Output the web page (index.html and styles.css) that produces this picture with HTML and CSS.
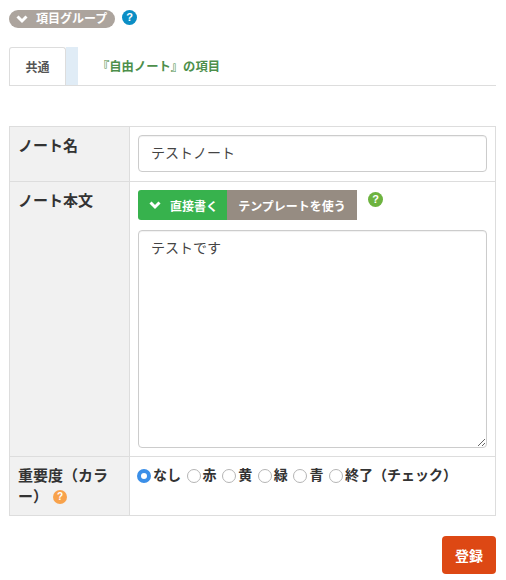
FILE: index.html
```html
<!DOCTYPE html>
<html lang="ja">
<head>
<meta charset="utf-8">
<title>ノート</title>
<link rel="stylesheet" href="styles.css">
</head>
<body>
<div class="group-head">
  <span class="badge">
    <svg class="chev" viewBox="0 0 12 10"><path d="M1.5 2.5 6 7 10.5 2.5" fill="none" stroke="#fff" stroke-width="3"/></svg>
    項目グループ
  </span>
  <span class="help help-blue">?</span>
</div>
<div class="tabs">
  <a class="tab tab-active">共通</a>
  <span class="tab-gap"></span>
  <a class="tab tab-link">『自由ノート』の項目</a>
</div>
<table class="form">
  <tr class="row-name">
    <th>ノート名</th>
    <td><input class="field" type="text" value="テストノート"></td>
  </tr>
  <tr class="row-body">
    <th>ノート本文</th>
    <td>
      <div class="mode">
        <span class="mode-btn mode-on">
          <svg class="chev" viewBox="0 0 12 10"><path d="M1.5 2.5 6 7 10.5 2.5" fill="none" stroke="#fff" stroke-width="3"/></svg>
          直接書く
        </span>
        <span class="mode-btn mode-off">テンプレートを使う</span>
        <span class="help help-green">?</span>
      </div>
      <textarea class="field area">テストです</textarea>
    </td>
  </tr>
  <tr class="row-level">
    <th>重要度（カラー） <span class="help help-orange">?</span></th>
    <td>
      <div class="radios">
        <label><input type="radio" name="c" checked>なし</label>
        <label><input type="radio" name="c">赤</label>
        <label><input type="radio" name="c">黄</label>
        <label><input type="radio" name="c">緑</label>
        <label><input type="radio" name="c">青</label>
        <label><input type="radio" name="c">終了（チェック）</label>
      </div>
    </td>
  </tr>
</table>
<div class="actions"><button class="submit">登録</button></div>
</body>
</html>
```
FILE: styles.css
```css
* { box-sizing: border-box; }
html, body { margin: 0; height: 100%; overflow: hidden; }
body {
  width: 506px;
  padding: 10px 10px 0 9px;
  background: #fff;
  color: #333;
  font-family: "Liberation Sans", "Noto Sans CJK JP", sans-serif;
  font-size: 14px;
}
.group-head { display: flex; align-items: flex-start; height: 37px; }
.badge {
  display: flex; align-items: center; gap: 8px;
  width: 106px; height: 18px; padding-left: 7px;
  background: #aca49d; color: #fff; border-radius: 9px;
  font-size: 12px; font-weight: 700; line-height: 18px; white-space: nowrap;
}
.chev { width: 12px; height: 10px; flex: none; }
.help {
  display: inline-flex; align-items: center; justify-content: center;
  width: 15px; height: 15px; border-radius: 50%;
  color: #fff; font-size: 11px; font-weight: 700; line-height: 1;
  font-family: "Liberation Sans", sans-serif;
}
.help-blue { background: #0b8ec5; margin: 0 0 0 7px; }
.help-green { background: #6db33f; margin: 2px 0 0 11px; }
.help-orange { background: #f8a24b; margin-left: 1px; font-size: 10px; width: 14px; height: 14px; vertical-align: 2px; }
.tabs {
  display: flex; height: 39px; border-bottom: 1px solid #ddd;
  font-size: 12px; font-weight: 700;
}
.tab { display: flex; align-items: center; height: 38px; }
.tab-active {
  width: 57px; justify-content: center; color: #555; background: #fff;
  border: 1px solid #ddd; border-bottom: 0; border-radius: 3px 3px 0 0;
}
.tab-gap { width: 12px; height: 38px; background: #e0ecf6; }
.tab-link { margin-left: 19px; color: #4d8f4b; font-size: 12.3px; }
.form {
  width: 487px; margin-top: 40px; border-collapse: collapse; table-layout: fixed;
  border: 1px solid #ddd;
}
.form th, .form td { border: 1px solid #ddd; vertical-align: top; }
.form th {
  width: 120px; padding: 8px 8px 0 8px; background: #f1f1f1; text-align: left;
  font-size: 15px; font-weight: 700; line-height: 21px; color: #333;
}
.form td { padding: 8px 8px 8px 8px; }
.row-name { height: 55px; }
.row-body { height: 275px; }
.row-level { height: 59px; }
.field {
  display: block; width: 349px; height: 37px; padding: 0 12px 3px;
  border: 1px solid #ccc; border-radius: 4px; background: #fff;
  color: #444; font: 14px/20px "Liberation Sans", "Noto Sans CJK JP", sans-serif;
  box-shadow: inset 0 1px 1px rgba(0,0,0,.06); outline: 0;
}
.area { height: 218px; margin-top: 10px; padding: 7px 12px; resize: vertical; }
.mode { display: flex; align-items: flex-start; height: 30px; }
.mode-btn {
  display: flex; align-items: center; height: 30px; color: #fff;
  font-size: 12px; font-weight: 700;
}
.mode-on { width: 89px; gap: 9px; padding-left: 11px; background: #37b24d; border-radius: 3px 0 0 3px; }
.mode-off { width: 130px; justify-content: center; background: #968c82; }
.radios { display: flex; gap: 5.6px; margin: 0 0 0 -1px; font-size: 14px; font-weight: 700; line-height: 20px; color: #333; }
.radios label { display: flex; align-items: center; height: 20px; white-space: nowrap; }
.radios input {
  appearance: none; -webkit-appearance: none;
  width: 14px; height: 14px; margin: 2px 2px 0 0; flex: none;
  border: 1px solid #b5b5b5; border-radius: 50%; background: #fff;
}
.radios input:checked { border: 4.5px solid #3b8fe8; background: #fff; }
.actions { display: flex; justify-content: flex-end; margin-top: 20px; }
.submit {
  width: 54px; height: 38px; border: 0; border-radius: 4px;
  background: #dd4814; color: #fff;
  font: 700 14px "Liberation Sans", "Noto Sans CJK JP", sans-serif;
}
```
